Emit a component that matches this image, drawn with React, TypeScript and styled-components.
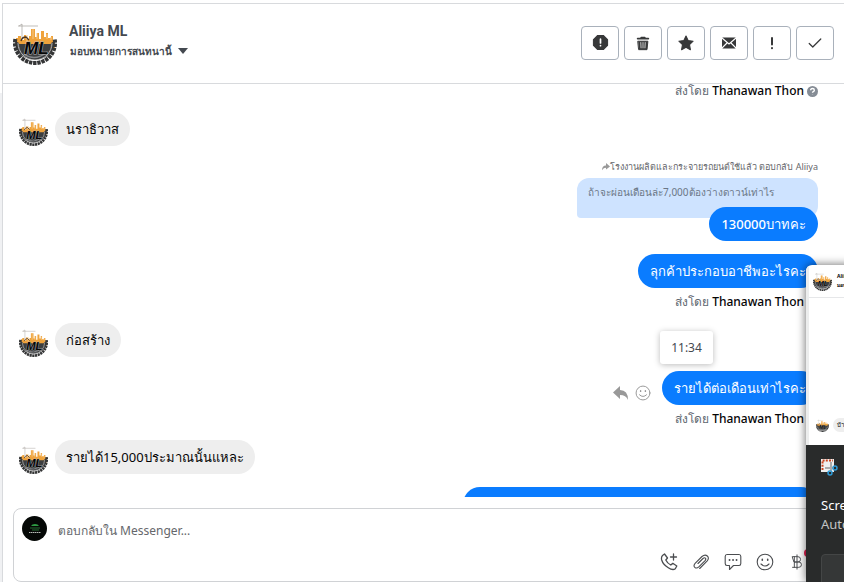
import React from "react";
import styled, { createGlobalStyle } from "styled-components";

const GlobalStyle = createGlobalStyle`
  * { box-sizing: border-box; }
  body { margin: 0; background: #fff; color: #050505; font: 14px/20px "Noto Sans", "Open Sans", sans-serif; }
  button, textarea { font: inherit; }
  h1, p { margin: 0; }
`;

const Page = styled.div`
  position: relative;
  display: flex;
  height: 100vh;
  padding-top: 3px;
  overflow: hidden;
`;
const Gutter = styled.div`
  width: 2px;
  flex: none;
  margin-top: 90px;
  background: #f0f1f3;
`;
const Panel = styled.main`
  flex: 1;
  min-width: 0;
  display: flex;
  flex-direction: column;
  border-top: 1px solid #d8dadd;
  border-left: 1px solid #d8dadd;
`;
const Header = styled.header`
  flex: none;
  display: flex;
  align-items: center;
  height: 80px;
  padding: 0 10px 2px;
  border-bottom: 1px solid #d8dadd;
`;
const Contact = styled.div`
  flex: 1;
  margin-left: 12px;
  padding-bottom: 4px;
`;
const Name = styled.h1`
  font: 700 14px/20px Roboto, sans-serif;
  color: #444950;
`;
const Assign = styled.button`
  display: flex;
  align-items: center;
  gap: 6px;
  border: 0;
  padding: 0 0 0 1px;
  background: none;
  color: #444950;
  font-size: 10px;
  line-height: 20px;
  font-weight: 600;
`;
const Actions = styled.div`
  display: flex;
  gap: 5px;
`;
const ActionButton = styled.button`
  display: grid;
  place-items: center;
  width: 38px;
  height: 34px;
  padding: 0;
  border: 1px solid #a9b1bb;
  border-radius: 4px;
  background: #fff;
  color: #373839;
`;
const Thread = styled.section`
  flex: 1;
  min-height: 0;
  overflow: hidden;
  padding: 0 26px 0 16px;
`;
const Row = styled.div<{ $out?: boolean; $gap?: number }>`
  display: flex;
  align-items: flex-end;
  justify-content: ${(p) => (p.$out ? "flex-end" : "flex-start")};
  gap: 7px;
  margin-top: ${(p) => p.$gap ?? 13}px;
`;
const Bubble = styled.p<{ $out?: boolean }>`
  position: relative;
  height: 34px;
  padding: 0 ${(p) => (p.$out ? 12 : 11)}px;
  border-radius: 17px;
  white-space: nowrap;
  line-height: 34px;
  font-size: 13px;
  font-weight: ${(p) => (p.$out ? 500 : 400)};
  background: ${(p) => (p.$out ? "#0a7cff" : "#eee")};
  color: ${(p) => (p.$out ? "#fff" : "#050505")};
`;
const LongBubble = styled(Bubble)`
  height: auto;
  padding: 7px 12px;
  line-height: 20px;
`;
const Sender = styled.p<{ $first?: boolean }>`
  display: flex;
  justify-content: flex-end;
  align-items: center;
  gap: 3px;
  height: ${(p) => (p.$first ? 14 : 22)}px;
  margin-top: ${(p) => (p.$first ? 0 : 3)}px;
  color: #606770;
  font-size: 12px;
  line-height: ${(p) => (p.$first ? 14 : 22)}px;
  b { font-weight: 500; color: #050505; }
`;
const ReplyLabel = styled.p`
  display: flex;
  align-items: center;
  justify-content: flex-end;
  height: 20px;
  margin-top: 11px;
  color: #65676b;
  font-size: 9px;
`;
const Quote = styled.blockquote`
  width: 241px;
  height: 40px;
  margin: 1px 0 0 auto;
  padding: 4px 11px;
  border-radius: 12px 12px 12px 4px;
  background: #cee3ff;
  color: #6b7786;
  font-size: 10px;
  white-space: nowrap;
`;
const HoverTools = styled.div`
  display: flex;
  align-items: center;
  gap: 6px;
  height: 24px;
  margin-right: 4px;
  color: #999;
`;
const PlainButton = styled.button`
  display: grid;
  place-items: center;
  padding: 0;
  border: 0;
  background: none;
  color: inherit;
`;
const BubbleWrap = styled.div`
  position: relative;
`;
const TimeTip = styled.time`
  position: absolute;
  left: -2px;
  bottom: 41px;
  width: 53px;
  height: 33px;
  border-radius: 3px;
  background: #fff;
  box-shadow: 0 1px 6px #0004;
  color: #444950;
  font-size: 12px;
  line-height: 33px;
  text-align: center;
`;
const Composer = styled.form`
  flex: none;
  margin: 11px -8px 0 10px;
  height: 74px;
  padding: 7px 8px;
  border: 1px solid #d0d2d5;
  border-radius: 8px;
  display: grid;
  grid-template-columns: 26px 1fr;
  grid-template-rows: 34px 24px;
  column-gap: 10px;
`;
const ReplyBox = styled.textarea`
  min-width: 0;
  width: 100%;
  height: 30px;
  padding: 5px 0;
  border: 0;
  outline: 0;
  resize: none;
  overflow: hidden;
  background: none;
  font-size: 12px;
  line-height: 20px;
  &::placeholder { color: #65676b; opacity: 1; }
`;
const Tools = styled.div`
  grid-column: 1 / -1;
  display: flex;
  justify-content: flex-end;
  gap: 12px;
  padding-right: 36px;
  color: #4b4d50;
`;
const ToolButton = styled(PlainButton)`
  position: relative;
  width: 20px;
  height: 24px;
`;
const Dot = styled.span`
  position: absolute;
  top: -1px;
  right: -5px;
  width: 8px;
  height: 8px;
  border-radius: 4px;
  background: #e41e4f;
`;
const Toast = styled.aside`
  position: absolute;
  right: -322px;
  bottom: 0;
  width: 360px;
  height: 317px;
  display: flex;
  flex-direction: column;
  border-radius: 6px 0 0 0;
  overflow: hidden;
  background: #fff;
  box-shadow: 0 0 10px #0009;
`;
const Preview = styled.div`
  height: 180px;
  flex: none;
  border-left: 3px solid #eceded;
  display: flex;
  flex-direction: column;
  justify-content: space-between;
`;
const PreviewHead = styled.div`
  display: flex;
  align-items: center;
  gap: 5px;
  height: 33px;
  padding-left: 4px;
  border-bottom: 1px solid #e6e7e9;
  font-size: 5px;
  line-height: 9px;
  font-weight: 700;
`;
const PreviewMessage = styled.div`
  display: flex;
  align-items: center;
  gap: 4px;
  padding: 0 0 13px 7px;
  span { padding: 0 4px; border-radius: 8px; background: #eee; font-size: 6px; line-height: 14px; }
`;
const ToastBody = styled.div`
  flex: 1;
  padding: 13px 15px 0;
  background: #292b2b;
  color: #fff;
  font: 13px/19px "Noto Sans", sans-serif;
  svg { display: block; margin-bottom: 20px; }
  p + p { color: #c3c5c5; }
`;
const ToastButton = styled.button`
  width: 100%;
  height: 36px;
  margin-top: 20px;
  border: 1px solid #444646;
  border-radius: 4px;
  background: #353737;
  color: #fff;
`;

const teeth = Array.from({ length: 17 }, (_, i) => i * 12 - 6);

function Logo({ size }: { size: number }) {
  return (
    <svg width={size} height={size} viewBox="0 0 44 44" aria-hidden="true">
      <path d="M3 26v-9h2v-2h3v4h3v-5h2v4h3v-3h2V8h4v8h2v-4h2v6h2v-8h3v6h2v-4h2v5h3v-2h2v4h2v8z" fill="#efa33c" />
      <path d="M14 21v-7M20 18V8M24 18v-6M34 18v-5M38 19v-3" stroke="#f6c987" strokeWidth="1" />
      <path d="M9 17V3M5 5h20M9 3l-3 2" fill="none" stroke="#a5a09b" strokeWidth=".7" />
      <path d="M2 20a20 19 0 0 0 40 0l-4 2a16 16 0 0 1-32 0z" fill="#343536" />
      <g fill="#343536">
        {teeth.map((a) => (
          <rect key={a} x="40" y="20.5" width="4" height="3.4" transform={`rotate(${a} 22 22)`} />
        ))}
      </g>
      <path d="M6 23h32c0 10-8 15.500-16 15.500S6 33 6 23z" fill="#3c3e40" />
      <path d="M11 33q11 8 23-2" fill="none" stroke="#85878a" strokeWidth="1.500" />
      <path d="M5 22a17 17 0 0 0 34 0" fill="none" stroke="#d8d8d8" strokeWidth=".8" />
      <path d="M8 20q1-4 5-4l3 3" fill="none" stroke="#4c3723" strokeWidth="1.300" />
      <text x="11" y="33" fontFamily="Liberation Sans" fontSize="17" fontWeight="700" fontStyle="italic" fill="#060606" stroke="#b4b4b4" strokeWidth="1" paintOrder="stroke">ML</text>
    </svg>
  );
}

function ShopAvatar() {
  return (
    <svg width="26" height="26" viewBox="0 0 26 26" aria-hidden="true">
      <circle cx="12.500" cy="12.500" r="12.500" fill="#050806" />
      <path d="M9 10q1-2 4-2t4 2z" fill="#2e9b43" />
      <path d="M8 12h10M10 14h7" stroke="#286e35" />
      <path d="M7 16.500h12" stroke="#b6bcb7" strokeWidth="1" strokeDasharray="1.500 .5" />
    </svg>
  );
}

function Svg({ size = 18, children }: { size?: number; children: React.ReactNode }) {
  return (
    <svg width={size} height={size} viewBox="0 0 18 18" fill="none" stroke="currentColor" strokeWidth="1.100" strokeLinecap="round" strokeLinejoin="round" aria-hidden="true">
      {children}
    </svg>
  );
}

const Smile = ({ size = 18 }: { size?: number }) => (
  <Svg size={size}>
    <circle cx="9" cy="9" r="7.800" />
    <path d="M5 11q4 4 8 0" />
    <path d="M6.300 6.400v.8M11.700 6.400v.8" strokeWidth="1.600" />
  </Svg>
);

const actions = [
  { label: "Report", icon: <Svg size={17}><path d="M6 1.500h6L16.500 6v6L12 16.500H6L1.500 12V6z" fill="currentColor" /><path d="M9 5.500v4M9 12.200v.2" stroke="#fff" strokeWidth="1.800" /></Svg> },
  { label: "Delete", icon: <Svg size={16}><path d="M3 4h12M7 3h4" strokeWidth="2" /><path d="M3.500 7h11l-1 9.500h-9z" fill="currentColor" /><path d="M6.500 8.500l.3 6M9 8.500v6M11.500 8.500l-.3 6" stroke="#ddd" strokeWidth="1" /></Svg> },
  { label: "Follow up", icon: <Svg><path d="M9 2l2.100 4.500 5 .7-3.600 3.500.9 5L9 13.300l-4.400 2.400.9-5L1.900 7.200l5-.7z" fill="currentColor" /></Svg> },
  { label: "Mark unread", icon: <Svg><rect x="2" y="3.500" width="14" height="11" rx="1" fill="currentColor" stroke="none" /><path d="M2 4l7 6 7-6M2 14l5-5M16 14l-5-5" stroke="#fff" /></Svg> },
  { label: "Spam", icon: <Svg><path d="M9 4v6.500M9 14v.2" strokeWidth="2" /></Svg> },
  { label: "Done", icon: <Svg size={16}><path d="M2.500 9.500l4 4 9-9" strokeWidth="1.400" /></Svg> },
];

const tools = [
  { label: "Call", icon: <Svg><path d="M2.500 2.500l2-1.500 3 4-1.700 2q1.700 3.500 5 5l2-1.700 4 2.700-1.500 2.700q-2.500 2-7-1Q3 11.500 1.700 7 1 4 2.500 2.500zM13.500 1v6M10.500 4h6" strokeWidth="1.300" /></Svg> },
  { label: "Attach", icon: <Svg><path d="M6 10.500L11 5.500q1.500-1.300 2.400-.4t-.3 2.500l-6.300 6.300q-2.300 2-4 .4t.3-4L10 3.500q3-2.600 5.300-.5t-.3 5.200l-7.300 7.300" /></Svg> },
  { label: "Saved replies", icon: <Svg><path d="M3 1.500h12q1.800 0 1.800 2v7q0 2-1.800 2H9.500l-4 4v-4H3q-1.800 0-1.800-2v-7q0-2 1.800-2z" /><path d="M5.500 7h.1M9 7h.1M12.500 7h.1" strokeWidth="1.800" /></Svg> },
  { label: "Emoji", icon: <Smile /> },
];

function Sent({ first }: { first?: boolean }) {
  return (
    <Sender $first={first}>
      <span>ส่งโดย <b>Thanawan Thon</b></span>
      <svg width="11" height="11" viewBox="0 0 12 12" aria-hidden="true">
        <circle cx="6" cy="6" r="6" fill="#858c95" />
        <path d="M4 4.700q0-2 2-2t2 1.800q0 1-1.200 1.600-.8.400-.8 1.200M6 9v.3" fill="none" stroke="#fff" strokeWidth="1.500" />
      </svg>
    </Sender>
  );
}

function Incoming({ text, gap }: { text: string; gap?: number }) {
  return (
    <Row $gap={gap}>
      <Logo size={29} />
      <Bubble>{text}</Bubble>
    </Row>
  );
}

export default function App() {
  return (
    <Page>
      <GlobalStyle />
      <Gutter />
      <Panel>
        <Header>
          <Logo size={44} />
          <Contact>
            <Name>Aliiya ML</Name>
            <Assign>
              มอบหมายการสนทนานี้
              <svg width="10" height="6" viewBox="0 0 10 6" aria-hidden="true"><path d="M0 0h10L5 6z" fill="currentColor" /></svg>
            </Assign>
          </Contact>
          <Actions>
            {actions.map((a) => <ActionButton key={a.label} aria-label={a.label}>{a.icon}</ActionButton>)}
          </Actions>
        </Header>
        <Thread>
          <Sent first />
          <Incoming text="นราธิวาส" gap={14} />
          <ReplyLabel>
            <svg width="8" height="8" viewBox="0 0 10 10" aria-hidden="true"><path d="M0 9q0-6 5-6V0l5 4.500L5 8V6Q2 6 0 9z" fill="#999" /></svg>
            โรงงานผลิตและกระจายรถยนต์ใช้แล้ว ตอบกลับ Aliiya
          </ReplyLabel>
          <Quote>ถ้าจะผ่อนเดือนล่ะ7,000ต้องว่างดาวน์เท่าไร</Quote>
          <Row $out $gap={-11}><Bubble $out>130000บาทคะ</Bubble></Row>
          <Row $out><Bubble $out>ลุกค้าประกอบอาชีพอะไรคะ</Bubble></Row>
          <Sent />
          <Incoming text="ก่อสร้าง" gap={10} />
          <Row $out $gap={14}>
            <HoverTools>
              <PlainButton aria-label="Reply">
                <svg width="16" height="14" viewBox="0 0 16 14" aria-hidden="true"><path d="M7 0v4q8 0 8 10-2-5-8-5v4L0 6.500z" fill="currentColor" /></svg>
              </PlainButton>
              <PlainButton aria-label="React"><Smile size={16} /></PlainButton>
            </HoverTools>
            <BubbleWrap>
              <TimeTip>11:34</TimeTip>
              <Bubble $out>รายได้ต่อเดือนเท่าไรคะ</Bubble>
            </BubbleWrap>
          </Row>
          <Sent />
          <Incoming text="รายได้15,000ประมาณนั้นแหละ" gap={10} />
          <Row $out><LongBubble $out>รบกวนขอเอกสารการทำงานและรายการเดือนต่อเดือนนะคะ</LongBubble></Row>
        </Thread>
        <Composer>
          <ShopAvatar />
          <ReplyBox aria-label="ตอบกลับใน Messenger" placeholder="ตอบกลับใน Messenger..." />
          <Tools>
            {tools.map((t) => <ToolButton type="button" key={t.label} aria-label={t.label}>{t.icon}</ToolButton>)}
            <ToolButton type="button" aria-label="Payment">
              <Svg size={16}><path d="M4 3h6q3 0 3 3t-3 3H6zM6 9h5q3 0 3 3t-3 3H4M6 3v12M9 1v16" /></Svg>
              <Dot />
            </ToolButton>
          </Tools>
        </Composer>
      </Panel>
      <Toast>
        <Preview>
          <PreviewHead><Logo size={19} /><span>Aliiya ML<br />มอบหมาย</span></PreviewHead>
          <PreviewMessage><Logo size={13} /><span>บ้านนา</span></PreviewMessage>
        </Preview>
        <ToastBody>
          <svg width="18" height="18" viewBox="0 0 18 18" aria-hidden="true">
            <path d="M0 1h13v13H0z" fill="#eee" />
            <path d="M1.500 12V2.500H12" fill="none" stroke="#c9441f" strokeWidth="2" strokeDasharray="2 1.200" />
            <path d="M10 4v9M4 10h9" stroke="#aaa" strokeWidth="2" />
            <g fill="none" stroke="#2d9bd8" strokeWidth="1.500"><circle cx="14" cy="10" r="2" /><circle cx="9" cy="15" r="2" /></g>
          </svg>
          <p>Screenshot copied to clipboard</p>
          <p>Automatically saved to screenshots folder.</p>
          <ToastButton>Markup and share</ToastButton>
        </ToastBody>
      </Toast>
    </Page>
  );
}
